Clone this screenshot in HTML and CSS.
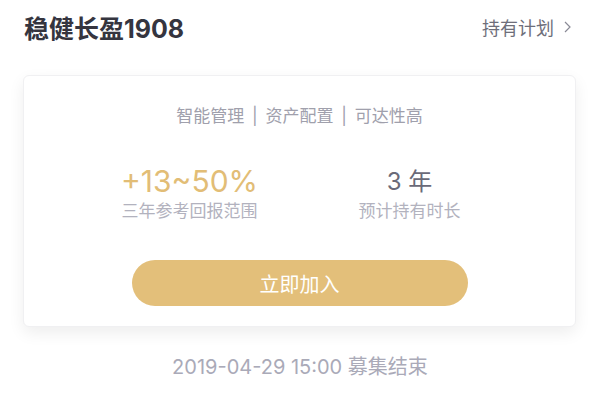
FILE: index.html
```html
<!DOCTYPE html>
<html lang="zh-CN">
<head>
    <meta charset="UTF-8">
    <meta name="viewport" content="width=device-width, initial-scale=1.0">
    <title>稳健长盈1908</title>

    <link rel="stylesheet" href="styles.css">
</head>
<body>
    <div class="page">
        <header class="head">
            <h1 class="plan-name">稳健长盈1908</h1>
            <a class="hold-link" href="#">持有计划
                <svg class="chev" width="7" height="12" viewBox="0 0 7 12">
                    <path d="M1 1 L6 6 L1 11" fill="none" stroke="#8a8a96" stroke-width="1.2"/>
                </svg>
            </a>
        </header>

        <section class="card">
            <p class="tags">智能管理 | 资产配置 | 可达性高</p>

            <div class="stats">
                <div class="stat">
                    <div class="stat-value gold">+13~50%</div>
                    <div class="stat-label">三年参考回报范围</div>
                </div>
                <div class="stat">
                    <div class="stat-value years">3 年</div>
                    <div class="stat-label">预计持有时长</div>
                </div>
            </div>

            <button class="join-btn" type="button">立即加入</button>
        </section>

        <!-- 募集截止时间 -->
        <p class="end-time">2019-04-29 15:00 募集结束</p>
    </div>
</body>
</html>
```

FILE: styles.css
```css
body {
    margin: 0;
    background: #fff;
    font-family: "Inter", "Noto Sans CJK SC", sans-serif;
}

.head {
    display: flex;
    justify-content: space-between;
    align-items: center;
    height: 54px;
    padding: 0 29px 0 24px;
}

.plan-name {
    margin: 0;
    font-size: 25px;
    font-weight: bold;
    color: #35353f;
}

.hold-link {
    display: flex;
    align-items: center;
    gap: 10px;
    font-size: 18px;
    color: #6e6e7a;
    text-decoration: none;
}

.card {
    margin: 21px 24px 0 23px;
    padding: 28px 0 20px;
    background: #fff;
    border: 1px solid #f0f0f2;
    border-radius: 6px;
    box-shadow: 0 6px 16px rgba(0, 0, 0, 0.07);
    text-align: center;
}

.tags {
    margin: 0;
    font-size: 17px;
    line-height: 24px;
    word-spacing: 3px;
    color: #a0a0ac;
}

.stats {
    display: grid;
    grid-template-columns: 220px 220px;
    justify-content: center;
    margin-top: 36px;
}

.stat-value {
    font-size: 30px;
    line-height: 35px;
}

.gold {color: #e2bd76;}

.years {
    font-size: 24px;
    color: #6a6a78;
}

.stat-label {
    font-size: 17px;
    line-height: 24px;
    color: #b2b2be;
}

.join-btn {
    display: block;
    width: 336px;
    height: 46px;
    margin: 37px auto 0;
    border: none;
    border-radius: 23px;
    background: #e3bf7a;
    color: #fff;
    font-family: inherit;
    font-size: 20px;
}

.end-time {
    margin: 27px 0 0;
    text-align: center;
    font-size: 20px;
    line-height: 26px;
    color: #aaaab8;
}
```
